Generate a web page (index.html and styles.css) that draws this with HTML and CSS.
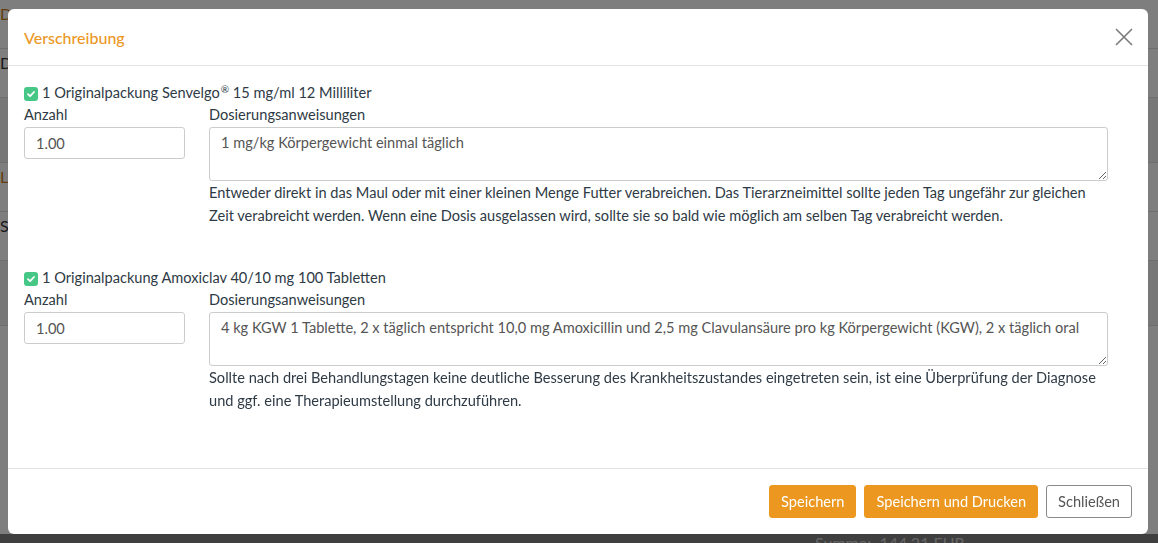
FILE: index.html
```html
<!DOCTYPE html>
<html>
<head>
  <title>Verschreibung</title>
  <link rel="stylesheet" href="styles.css">
</head>
<body>
  <div class="page">
    <div class="page-row"><span class="ghost orange">D</span></div>
    <div class="page-row"><span class="ghost">D</span></div>
    <div class="page-row tall"></div>
    <div class="page-row"><span class="ghost orange">L</span></div>
    <div class="page-row"><span class="ghost">S</span></div>
    <div class="page-row tall"></div>
    <div class="page-footer"><span class="sum">Summe:&nbsp;&nbsp;144,21 EUR</span></div>
  </div>

  <div class="backdrop"></div>

  <div class="modal">
    <div class="modal-header">
      <h4 class="modal-title">Verschreibung</h4>
      <button class="close" aria-label="Close">
        <svg width="18" height="18" viewBox="0 0 18 18"><path d="M1 1L17 17M17 1L1 17" stroke="#7a7a7a" stroke-width="1.6" fill="none"/></svg>
      </button>
    </div>

    <div class="modal-body">
      <div class="item">
        <label class="item-title"><span class="check"><svg width="10" height="10" viewBox="0 0 10 10"><path d="M2 5.2L4.1 7.2L8 3" stroke="#fff" stroke-width="1.8" fill="none" stroke-linecap="round" stroke-linejoin="round"/></svg></span>1 Originalpackung Senvelgo<sup>®</sup> 15 mg/ml 12 Milliliter</label>
        <div class="fields">
          <div class="col-qty">
            <div class="lbl">Anzahl</div>
            <input class="qty" type="text" value="1.00">
          </div>
          <div class="col-dose">
            <div class="lbl">Dosierungsanweisungen</div>
            <textarea class="dose">1 mg/kg Körpergewicht einmal täglich</textarea>
            <p class="help">Entweder direkt in das Maul oder mit einer kleinen Menge Futter verabreichen. Das Tierarzneimittel sollte jeden Tag ungefähr zur gleichen Zeit verabreicht werden. Wenn eine Dosis ausgelassen wird, sollte sie so bald wie möglich am selben Tag verabreicht werden.</p>
          </div>
        </div>
      </div>

      <div class="item">
        <label class="item-title"><span class="check"><svg width="10" height="10" viewBox="0 0 10 10"><path d="M2 5.2L4.1 7.2L8 3" stroke="#fff" stroke-width="1.8" fill="none" stroke-linecap="round" stroke-linejoin="round"/></svg></span>1 Originalpackung Amoxiclav 40/10 mg 100 Tabletten</label>
        <div class="fields">
          <div class="col-qty">
            <div class="lbl">Anzahl</div>
            <input class="qty" type="text" value="1.00">
          </div>
          <div class="col-dose">
            <div class="lbl">Dosierungsanweisungen</div>
            <textarea class="dose">4 kg KGW 1 Tablette, 2 x täglich entspricht 10,0 mg Amoxicillin und 2,5 mg Clavulansäure pro kg Körpergewicht (KGW), 2 x täglich oral</textarea>
            <p class="help">Sollte nach drei Behandlungstagen keine deutliche Besserung des Krankheitszustandes eingetreten sein, ist eine Überprüfung der Diagnose und ggf. eine Therapieumstellung durchzuführen.</p>
          </div>
        </div>
      </div>
    </div>

    <div class="modal-footer">
      <button class="btn btn-primary">Speichern</button>
      <button class="btn btn-primary">Speichern und Drucken</button>
      <button class="btn btn-default">Schließen</button>
    </div>
  </div>
</body>
</html>
```

FILE: styles.css
```css
html, body { margin: 0; height: 100%; overflow: hidden; }
body { font-family: Lato, "Open Sans", Arial, sans-serif; font-size: 14.6px; color: #2e3a45; background: #fdfdfd; }

.page { height: 100%; position: relative; }
.page-row { height: 44px; border-bottom: 1px solid #ddd; padding: 4px 0 0 0; font-size: 16px; }
.page-row.tall { height: 60px; background: #eee; }
.ghost { color: #333; }
.ghost.orange { color: #c87a1a; }
.page-footer { position: absolute; left: 0; right: 0; bottom: -20px; height: 29px; background: #7e7e7e; }
.sum { position: absolute; left: 815px; top: 1px; font-size: 16px; line-height: 16px; color: #ccc; }

.backdrop { position: fixed; inset: 0; background: rgba(0, 0, 0, 0.5); }

.modal { position: fixed; left: 8px; top: 9px; width: 1140px; height: 525px; background: #fff; border-radius: 6px; display: flex; flex-direction: column; }

.modal-header { height: 56px; border-bottom: 1px solid #e3e3e3; display: flex; align-items: center; justify-content: space-between; padding: 0 15px 0 16px; }
.modal-title { margin: 0; font-size: 16px; font-weight: 500; color: #ec971f; }
.close { background: none; border: 0; padding: 0; width: 18px; height: 18px; cursor: pointer; }

.modal-body { flex: 1; padding: 17px 40px 0 16px; }
.item { margin-bottom: 41px; }
.item-title { display: block; line-height: 20px; height: 20px; }
.item-title sup { font-size: 10px; line-height: 0; vertical-align: 5px; margin-left: 1px; }
.check { width: 14px; height: 14px; border-radius: 3px; background: #47c786; display: inline-flex; align-items: center; justify-content: center; margin-right: 4px; vertical-align: -1px; }

.fields { display: flex; gap: 24px; }
.col-qty { width: 161px; }
.col-dose { flex: 1; }
.lbl { line-height: 20px; margin: 2px 0 2px; }
.qty { box-sizing: border-box; width: 161px; height: 32px; border: 1px solid #ccc; border-radius: 3px; padding: 0 11px; font: inherit; color: #555; }
.dose { display: block; box-sizing: border-box; width: 100%; height: 54px; border: 1px solid #ccc; border-radius: 3px; padding: 6px 11px; font: inherit; color: #555; resize: vertical; }
.help { margin: 0; line-height: 23px; }

.modal-footer { height: 66px; border-top: 1px solid #e3e3e3; box-sizing: border-box; display: flex; align-items: center; justify-content: flex-end; gap: 8px; padding: 0 16px 0 0; }
.btn { height: 33px; border-radius: 3px; font: inherit; padding: 0 11px; cursor: pointer; }
.btn-primary { background: #ec971f; border: 1px solid #ec971f; color: #fff; }
.btn-default { background: #fff; border: 1px solid #8a8a8a; color: #555; }
```
